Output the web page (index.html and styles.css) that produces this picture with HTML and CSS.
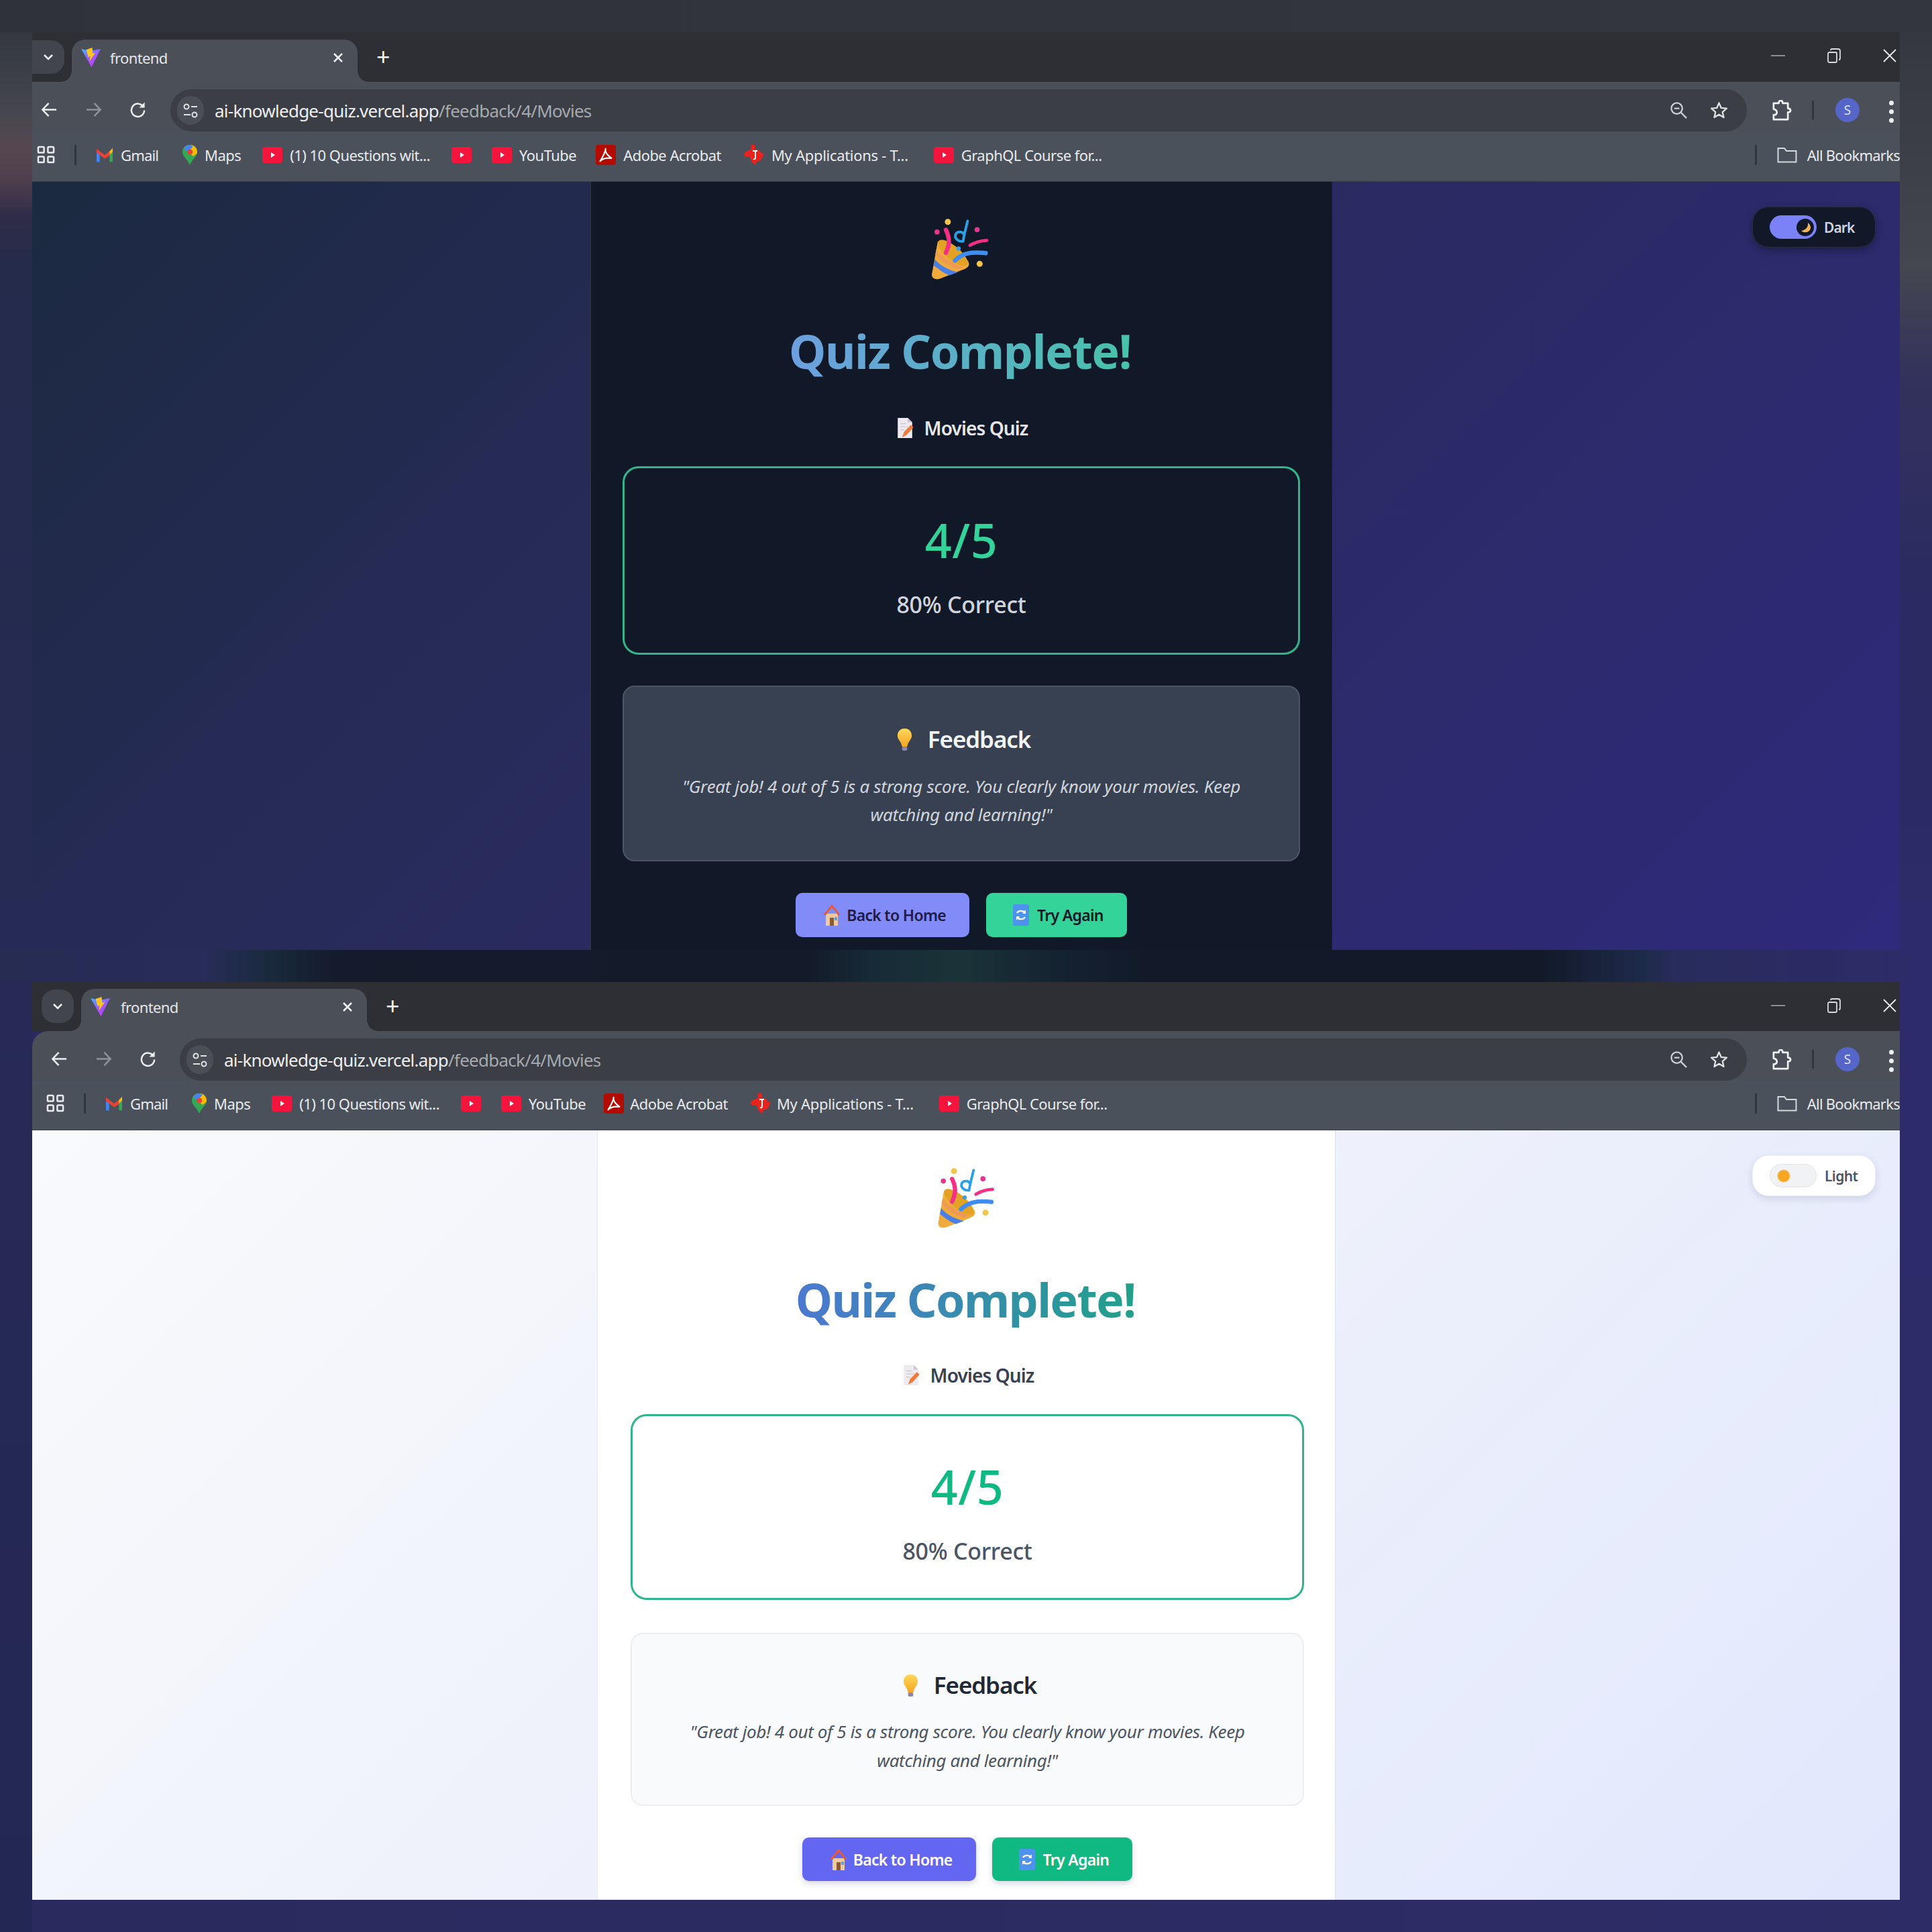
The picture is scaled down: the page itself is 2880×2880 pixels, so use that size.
FILE: index.html
```html
<!DOCTYPE html>
<html lang="en">
<head>
<meta charset="utf-8">
<title>frontend</title>
<link rel="stylesheet" href="styles.css">
</head>
<body>
<svg class="defs" width="0" height="0" aria-hidden="true">
  <defs>
    <linearGradient id="g-vite" x1="0" y1="0" x2="0.6" y2="1"><stop offset="0" stop-color="#41b6ff"/><stop offset="0.55" stop-color="#9b5cff"/><stop offset="1" stop-color="#c13dff"/></linearGradient>
    <linearGradient id="g-bulb" x1="0" y1="0" x2="0" y2="1"><stop offset="0" stop-color="#ffd85a"/><stop offset="1" stop-color="#f5a524"/></linearGradient>
    <symbol id="i-vite" viewBox="0 0 30 30"><path d="M0 2 15 5 30 2 16 30Z" fill="url(#g-vite)"/><path d="M17 0 8 3 11 15 14 13 13 21 22 8 18 9Z" fill="#ffc51f"/></symbol>
    <symbol id="i-back" viewBox="0 0 26 26"><path d="M24 13H3M12 3 2.500 13 12 23" fill="none" stroke="currentColor" stroke-width="2.600"/></symbol>
    <symbol id="i-fwd" viewBox="0 0 26 26"><path d="M2 13H23M14 3 23.500 13 14 23" fill="none" stroke="currentColor" stroke-width="2.600"/></symbol>
    <symbol id="i-reload" viewBox="0 0 26 26"><path d="M21.500 8.500A10 10 0 1 0 23 14" fill="none" stroke="currentColor" stroke-width="2.600"/><path d="M23.500 1.500V10H15Z" fill="currentColor"/></symbol>
    <symbol id="i-tune" viewBox="0 0 24 24"><circle cx="6" cy="6" r="3.500" fill="none" stroke="currentColor" stroke-width="2"/><path d="M13 6H22M2 18H12" stroke="currentColor" stroke-width="2"/><circle cx="18" cy="18" r="3.500" fill="none" stroke="currentColor" stroke-width="2"/></symbol>
    <symbol id="i-zoom" viewBox="0 0 28 28"><circle cx="11" cy="11" r="8.500" fill="none" stroke="currentColor" stroke-width="2.400"/><path d="M7 11H15M17 17 26 26" stroke="currentColor" stroke-width="2.400"/></symbol>
    <symbol id="i-star" viewBox="0 0 28 28"><path d="M14 2.500 17.400 10.300 25.800 11 19.400 16.600 21.300 24.900 14 20.500 6.700 24.900 8.600 16.600 2.200 11 10.600 10.300Z" fill="none" stroke="currentColor" stroke-width="2.400" stroke-linejoin="round"/></symbol>
    <symbol id="i-puzzle" viewBox="0 0 32 32"><path d="M4 5H12Q12 1 15 1T18 5H26V13Q30 13 30 16T26 19V30H4V23Q9 23 9 19T4 14Z" fill="none" stroke="currentColor" stroke-width="2.800" stroke-linejoin="round"/></symbol>
    <symbol id="i-apps" viewBox="0 0 28 28"><g fill="none" stroke="currentColor" stroke-width="2.600"><rect x="2" y="2" width="9" height="9" rx="1.500"/><rect x="17" y="2" width="9" height="9" rx="1.500"/><rect x="2" y="17" width="9" height="9" rx="1.500"/><rect x="17" y="17" width="9" height="9" rx="1.500"/></g></symbol>
    <symbol id="i-gmail" viewBox="0 0 30 26"><path d="M2 24V5L7 8V24Z" fill="#4285f4"/><path d="M23 24V8L28 5V24Z" fill="#34a853"/><path d="M2 3 15 13 23 7V14L15 19 2 9Z" fill="#ea4335"/><path d="M23 7 28 2V8L23 13Z" fill="#fbbc04"/></symbol>
    <symbol id="i-maps" viewBox="0 0 22 30"><path d="M11 0C4 0 0 5 0 10.500 0 17 7 21 11 30 15 21 22 17 22 10.500 22 5 18 0 11 0Z" fill="#34a853"/><path d="M11 0C7 0 4 2 2 5L16 17C19 14 22 14 22 10.500 22 5 18 0 11 0Z" fill="#fbbc04"/><path d="M11 0C7 0 4 2 2 5L8 11 16 2Z" fill="#4285f4"/><circle cx="11" cy="10.500" r="4" fill="#ea4335"/></symbol>
    <symbol id="i-yt" viewBox="0 0 30 24"><rect width="30" height="24" rx="4" fill="#f4143c"/><path d="M13 8 19 12 13 16Z" fill="#fff"/></symbol>
    <symbol id="i-adobe" viewBox="0 0 30 30"><rect width="30" height="30" rx="4" fill="#b30b00"/><path d="M15 5C13 10 16 14 24 20 17 19 10 20 6 25 10 19 14 12 15 5Z" fill="none" stroke="#fff" stroke-width="2"/></symbol>
    <symbol id="i-ti" viewBox="0 0 30 30"><path d="M11 0H16V6L23 8 26 12 30 13 25 23 19 25 16 30 11 24 9 18 1 17 0 12 7 8 11 7Z" fill="#e8221d"/><path d="M13 9H20M17 9V19Q17 22 14 21" fill="none" stroke="#fff" stroke-width="2"/></symbol>
    <symbol id="i-folder" viewBox="0 0 30 24"><path d="M1.500 22.500V2H11L14 6H28.500V22.500Z" fill="none" stroke="currentColor" stroke-width="2"/></symbol>
    <symbol id="i-restore" viewBox="0 0 20 22"><rect x="1" y="6" width="13" height="15" rx="2" fill="none" stroke="currentColor" stroke-width="1.800"/><path d="M5 3Q5 1 7 1H16Q19 1 19 4V15Q19 17 17 17" fill="none" stroke="currentColor" stroke-width="1.800"/></symbol>
    <symbol id="i-popper" viewBox="260 70 270 290">
      <path d="M290 180C335 165 405 225 432 272 442 292 428 302 415 307L300 352C272 360 258 345 264 325Z" fill="#efab3c"/>
      <path d="M277 262C300 290 335 310 384 322L345 337C315 325 290 305 271 290Z" fill="#4a7fe8"/>
      <path d="M283 216C300 245 340 272 408 298L384 308C340 295 300 268 279 240Z" fill="#ee9a55"/>
      <ellipse cx="360" cy="232" rx="86" ry="32" transform="rotate(40 360 232)" fill="#e3a224"/>
      <path d="M328 125C348 165 345 195 328 232" fill="none" stroke="#f42f85" stroke-width="20" stroke-linecap="round"/>
      <path d="M370 268C405 232 450 226 513 233" fill="none" stroke="#3f8cf2" stroke-width="20" stroke-linecap="round"/>
      <path d="M440 197C465 182 490 175 518 174" fill="none" stroke="#f42f85" stroke-width="15" stroke-linecap="round"/>
      <path d="M429 84C420 120 412 150 408 178Q385 182 372 160 370 132 398 135 410 138 414 150" fill="none" stroke="#2ba0e6" stroke-width="12" stroke-linecap="round"/>
      <circle cx="337" cy="88" r="14" fill="#f4c54a"/><circle cx="287" cy="135" r="12" fill="#e9358f"/><circle cx="473" cy="124" r="12" fill="#e9358f"/><circle cx="485" cy="283" r="14" fill="#f4c54a"/><circle cx="387" cy="212" r="10" fill="#3f9cdc"/>
    </symbol>
    <symbol id="i-memo" viewBox="0 0 26 32"><path d="M1 0H17L24 7V32H1Z" fill="#eeeaf0"/><path d="M17 0V7H24Z" fill="#c9c4d0"/><path d="M5 9H14M5 14H18M5 19H11" stroke="#cfcad6" stroke-width="1.500"/><path d="M8 31 11 22 22 11 26 15 15 27Z" fill="#f07a3a"/></symbol>
    <symbol id="i-bulb" viewBox="0 0 28 34"><path d="M14 0C7 0 3 5 3 11 3 17 9 20 10 28H18C19 20 25 17 25 11 25 5 21 0 14 0Z" fill="url(#g-bulb)"/><rect x="10" y="28" width="8" height="6" rx="2" fill="#8d86a8"/></symbol>
    <symbol id="i-house" viewBox="0 0 26 32"><path d="M4 14H22V32H4Z" fill="#efc9a0"/><path d="M13 0 26 16H21V14L13 5 5 14V16H0Z" fill="#e8583c"/><rect x="10" y="20" width="6" height="12" fill="#8a5a32"/><rect x="17" y="19" width="4" height="5" fill="#5aa5e8"/></symbol>
    <symbol id="i-repeat" viewBox="0 0 24 32"><rect width="24" height="32" rx="3" fill="#4d93ee"/><path d="M6 13C8 9 15 9 17 12M18 19C16 23 9 23 7 20" fill="none" stroke="#fff" stroke-width="2.400"/><path d="M19 8V14H14ZM5 24V18H10Z" fill="#fff"/></symbol>
    <symbol id="i-moon" viewBox="0 0 26 26"><circle cx="13" cy="13" r="13" fill="#111827"/><path d="M17 6C18 12 14 17 7 18 11 22 20 21 21 14 21 11 20 8 17 6Z" fill="#f5b45a"/></symbol>
    <symbol id="i-sun" viewBox="0 0 20 20"><circle cx="10" cy="10" r="9" fill="#f5a623" stroke="#f0c27a" stroke-width="1.500" stroke-dasharray="3 1.500"/></symbol>
  </defs>
</svg>

<main class="sheet">
  <section class="win win--dark">
    <div class="strip">
      <div class="expand"><svg class="chev" viewBox="0 0 16 10"><path d="M2 2 8 8 14 2" fill="none" stroke="currentColor" stroke-width="2.600"/></svg></div>
      <div class="tab">
        <svg class="ico favicon"><use href="#i-vite"/></svg>
        <span class="tab-title">frontend</span>
        <svg class="tab-x" viewBox="0 0 16 16"><path d="M2 2 14 14M14 2 2 14" stroke="currentColor" stroke-width="2.600"/></svg>
      </div>
      <span class="tab-plus">+</span>
      <div class="wctl">
        <span class="wmin"></span>
        <svg class="ico wrest"><use href="#i-restore"/></svg>
        <svg class="wclose" viewBox="0 0 20 20"><path d="M1 1 19 19M19 1 1 19" stroke="currentColor" stroke-width="1.800"/></svg>
      </div>
    </div>
    <div class="toolbar">
      <svg class="ico nav"><use href="#i-back"/></svg>
      <svg class="ico nav nav--off"><use href="#i-fwd"/></svg>
      <svg class="ico nav"><use href="#i-reload"/></svg>
      <div class="omni">
        <span class="chip"><svg class="ico chip-ico"><use href="#i-tune"/></svg></span>
        <span class="url"><span class="host">ai-knowledge-quiz.vercel.app</span><span class="path">/feedback/4/Movies</span></span>
        <svg class="ico omni-zoom"><use href="#i-zoom"/></svg>
        <svg class="ico omni-star"><use href="#i-star"/></svg>
      </div>
      <svg class="ico puzzle"><use href="#i-puzzle"/></svg>
      <span class="vsep"></span>
      <span class="avatar">S</span>
      <span class="dots"><i></i><i></i><i></i></span>
    </div>
    <div class="bookmarks">
      <svg class="ico apps"><use href="#i-apps"/></svg>
      <span class="bsep"></span>
      <span class="bm bm--gmail"><svg class="ico bi"><use href="#i-gmail"/></svg>Gmail</span>
      <span class="bm bm--maps"><svg class="ico bi bi--maps"><use href="#i-maps"/></svg>Maps</span>
      <span class="bm bm--q"><svg class="ico bi"><use href="#i-yt"/></svg>(1) 10 Questions wit...</span>
      <span class="bm bm--y1"><svg class="ico bi"><use href="#i-yt"/></svg></span>
      <span class="bm bm--yt"><svg class="ico bi"><use href="#i-yt"/></svg>YouTube</span>
      <span class="bm bm--ad"><svg class="ico bi bi--tall"><use href="#i-adobe"/></svg>Adobe Acrobat</span>
      <span class="bm bm--ti"><svg class="ico bi bi--tall"><use href="#i-ti"/></svg>My Applications - T...</span>
      <span class="bm"><svg class="ico bi"><use href="#i-yt"/></svg>GraphQL Course for...</span>
      <span class="bsep bsep--end"></span>
      <span class="bm bm--all"><svg class="ico bi bi--folder"><use href="#i-folder"/></svg>All Bookmarks</span>
    </div>
    <div class="page">
      <div class="theme"><span class="track"><svg class="ico knob"><use href="#i-moon"/></svg></span><span class="theme-label">Dark</span></div>
      <article class="panel">
        <svg class="ico popper"><use href="#i-popper"/></svg>
        <h1 class="title">Quiz Complete!</h1>
        <p class="topic"><svg class="ico memo"><use href="#i-memo"/></svg>Movies Quiz</p>
        <div class="score"><div class="score-num">4/5</div><div class="score-pct">80% Correct</div></div>
        <div class="fb">
          <h2 class="fb-head"><svg class="ico bulb"><use href="#i-bulb"/></svg>Feedback</h2>
          <p class="fb-text">"Great job! 4 out of 5 is a strong score. You clearly know your movies. Keep watching and learning!"</p>
        </div>
        <div class="actions">
          <a class="btn btn--home"><svg class="ico bicon"><use href="#i-house"/></svg>Back to Home</a>
          <a class="btn btn--retry"><svg class="ico bicon bicon--r"><use href="#i-repeat"/></svg>Try Again</a>
        </div>
      </article>
    </div>
  </section>

  <div class="gap"></div>

  <section class="win win--light">
    <div class="strip">
      <div class="expand"><svg class="chev" viewBox="0 0 16 10"><path d="M2 2 8 8 14 2" fill="none" stroke="currentColor" stroke-width="2.600"/></svg></div>
      <div class="tab">
        <svg class="ico favicon"><use href="#i-vite"/></svg>
        <span class="tab-title">frontend</span>
        <svg class="tab-x" viewBox="0 0 16 16"><path d="M2 2 14 14M14 2 2 14" stroke="currentColor" stroke-width="2.600"/></svg>
      </div>
      <span class="tab-plus">+</span>
      <div class="wctl">
        <span class="wmin"></span>
        <svg class="ico wrest"><use href="#i-restore"/></svg>
        <svg class="wclose" viewBox="0 0 20 20"><path d="M1 1 19 19M19 1 1 19" stroke="currentColor" stroke-width="1.800"/></svg>
      </div>
    </div>
    <div class="toolbar">
      <svg class="ico nav"><use href="#i-back"/></svg>
      <svg class="ico nav nav--off"><use href="#i-fwd"/></svg>
      <svg class="ico nav"><use href="#i-reload"/></svg>
      <div class="omni">
        <span class="chip"><svg class="ico chip-ico"><use href="#i-tune"/></svg></span>
        <span class="url"><span class="host">ai-knowledge-quiz.vercel.app</span><span class="path">/feedback/4/Movies</span></span>
        <svg class="ico omni-zoom"><use href="#i-zoom"/></svg>
        <svg class="ico omni-star"><use href="#i-star"/></svg>
      </div>
      <svg class="ico puzzle"><use href="#i-puzzle"/></svg>
      <span class="vsep"></span>
      <span class="avatar">S</span>
      <span class="dots"><i></i><i></i><i></i></span>
    </div>
    <div class="bookmarks">
      <svg class="ico apps"><use href="#i-apps"/></svg>
      <span class="bsep"></span>
      <span class="bm bm--gmail"><svg class="ico bi"><use href="#i-gmail"/></svg>Gmail</span>
      <span class="bm bm--maps"><svg class="ico bi bi--maps"><use href="#i-maps"/></svg>Maps</span>
      <span class="bm bm--q"><svg class="ico bi"><use href="#i-yt"/></svg>(1) 10 Questions wit...</span>
      <span class="bm bm--y1"><svg class="ico bi"><use href="#i-yt"/></svg></span>
      <span class="bm bm--yt"><svg class="ico bi"><use href="#i-yt"/></svg>YouTube</span>
      <span class="bm bm--ad"><svg class="ico bi bi--tall"><use href="#i-adobe"/></svg>Adobe Acrobat</span>
      <span class="bm bm--ti"><svg class="ico bi bi--tall"><use href="#i-ti"/></svg>My Applications - T...</span>
      <span class="bm"><svg class="ico bi"><use href="#i-yt"/></svg>GraphQL Course for...</span>
      <span class="bsep bsep--end"></span>
      <span class="bm bm--all"><svg class="ico bi bi--folder"><use href="#i-folder"/></svg>All Bookmarks</span>
    </div>
    <div class="page">
      <div class="theme"><span class="track"><svg class="ico knob"><use href="#i-sun"/></svg></span><span class="theme-label">Light</span></div>
      <article class="panel">
        <svg class="ico popper"><use href="#i-popper"/></svg>
        <h1 class="title">Quiz Complete!</h1>
        <p class="topic"><svg class="ico memo"><use href="#i-memo"/></svg>Movies Quiz</p>
        <div class="score"><div class="score-num">4/5</div><div class="score-pct">80% Correct</div></div>
        <div class="fb">
          <h2 class="fb-head"><svg class="ico bulb"><use href="#i-bulb"/></svg>Feedback</h2>
          <p class="fb-text">"Great job! 4 out of 5 is a strong score. You clearly know your movies. Keep watching and learning!"</p>
        </div>
        <div class="actions">
          <a class="btn btn--home"><svg class="ico bicon"><use href="#i-house"/></svg>Back to Home</a>
          <a class="btn btn--retry"><svg class="ico bicon bicon--r"><use href="#i-repeat"/></svg>Try Again</a>
        </div>
      </article>
    </div>
  </section>
</main>
</body>
</html>
```

FILE: styles.css
```css
* { box-sizing: border-box; }
html, body { margin: 0; padding: 0; }
body {
  font-family: "Noto Sans", "Open Sans", sans-serif;
  background: #262a55;
}
.defs { position: absolute; }
.ico { display: block; flex: none; }

.sheet {
  width: 2880px;
  height: 2880px;
  padding: 48px 0;
  background:
    linear-gradient(90deg, #2f3239, #31343b 50%, #33363d) left top / 100% 48px no-repeat,
    linear-gradient(180deg, #2f3239 0, #3a3e45 100px, #47474f 170px, #57474f 220px, #4f3f4e 270px, #2f2c48 320px, #242b4b 400px, #262a55 1464px, #232753 2880px) left top / 48px 100% no-repeat,
    linear-gradient(180deg, #33363d 0, #444650 400px, #33325c 560px, #2b2a62 900px, #2d2b6a 1500px, #2d2c66 2880px) right top / 48px 100% no-repeat,
    linear-gradient(90deg, #2a2a5e, #2d2c66 100%);
}

/* between the two windows: the blurred wallpaper showing through */
.gap {
  height: 48px;
  background: linear-gradient(90deg, #262c52 0, #282c5a 300px, #1a2a3d 400px, #141b2c 500px, #131a2a 1200px, #172a37 1300px, #1a3338 1430px, #142030 1600px, #121a2a 1700px, #121a2a 2300px, #1e2a4a 2450px, #282c5c 2500px, #2d2b6a 2880px);
}

.win {
  margin: 0 48px;
  width: 2784px;
  color: #e8eaed;
  overflow: hidden;
  --strip-h: 74px;
  --tool-h: 74px;
  --inset: 0px;
}
.win--light { --strip-h: 73px; --tool-h: 73px; --inset: 14px; }

/* ---------- tab strip ---------- */
.strip {
  height: var(--strip-h);
  background: #2d2f35;
  display: flex;
  align-items: flex-end;
  padding-left: var(--inset);
  position: relative;
}
.expand {
  width: 48px;
  height: 50px;
  margin-bottom: 12px;
  background: #42454c;
  border-radius: 0 20px 20px 0;
  display: flex;
  align-items: center;
  justify-content: center;
}
.win--light .expand { border-radius: 20px; }
.chev { width: 16px; height: 10px; color: #eceef0; }
.tab {
  position: relative;
  width: 426px;
  height: 63px;
  margin-left: 11px;
  background: #4a4f58;
  border-radius: 20px 20px 0 0;
  display: flex;
  align-items: center;
  padding: 0 0 10px 14px;
}
.tab::before, .tab::after {
  content: "";
  position: absolute;
  bottom: 0;
  width: 16px;
  height: 16px;
}
.tab::before { left: -16px; background: radial-gradient(circle at 0 0, transparent 15.500px, #4a4f58 16px); }
.tab::after { right: -16px; background: radial-gradient(circle at 100% 0, transparent 15.500px, #4a4f58 16px); }
.favicon { width: 29px; height: 31px; }
.tab-title { margin-left: 14px; font-size: 22px; letter-spacing: -0.6px; color: #e4e6e8; }
.win--light .tab-title { margin-left: 16px; }
.tab-x { width: 16px; height: 16px; margin-left: auto; margin-right: 21px; color: #eceef0; }
.tab-plus { margin: 0 0 14px 28px; font-size: 36px; line-height: 46px; font-weight: 400; color: #f1f2f3; height: 46px; }
.wctl { margin-left: auto; display: flex; align-items: center; height: 70px; position: absolute; right: 5px; top: 0; }
.wmin { width: 21px; height: 2px; background: #8b8e94; }
.wrest { width: 20px; height: 22px; margin-left: 63px; color: #d8dadc; }
.wclose { width: 20px; height: 20px; margin-left: 63px; color: #e8eaed; }

/* ---------- toolbar ---------- */
.toolbar {
  height: var(--tool-h);
  background: #4a4f58;
  display: flex;
  align-items: flex-start;
  padding: 11px 0 0 calc(13px + var(--inset));
}
.win--light .toolbar { border-top-left-radius: 24px; padding-left: 28px; }
.nav { width: 25px; height: 25px; margin-top: 18px; color: #eceef0; }
.nav + .nav { margin-left: 41px; }
.nav--off { color: #8f939a; }
.omni {
  height: 63px;
  margin-left: 36px;
  flex: 1;
  background: #3b3e44;
  border-radius: 32px;
  display: flex;
  align-items: center;
  padding: 0 28px 0 10px;
}
.win--light .omni { margin-left: 35px; }
.chip {
  width: 40px;
  height: 43px;
  border-radius: 20px;
  background: #4a4e55;
  display: flex;
  align-items: center;
  justify-content: center;
}
.chip-ico { width: 24px; height: 24px; color: #e0e2e4; }
.url { margin-left: 16px; font-size: 26px; letter-spacing: -0.75px; white-space: nowrap; }
.host { color: #eceef0; }
.path { color: #a6a9ae; }
.omni-zoom { width: 27px; height: 27px; margin-left: auto; color: #c9ccd0; }
.omni-star { width: 27px; height: 27px; margin-left: 33px; color: #dfe1e3; }
.puzzle { width: 31px; height: 31px; margin: 16px 0 0 36px; color: #f0f1f2; }
.vsep { width: 3px; height: 28px; margin: 17px 0 0 30px; background: #33363c; }
.avatar {
  width: 36px;
  height: 36px;
  margin: 13px 0 0 32px;
  border-radius: 50%;
  background: #5566c8;
  color: #dfe4f5;
  font-size: 19px;
  line-height: 36px;
  text-align: center;
}
.dots { display: flex; flex-direction: column; gap: 6px; margin: 17px 0 0 44px; width: 16px; }
.dots i { display: block; width: 7px; height: 7px; border-radius: 50%; background: #eceef0; }

/* ---------- bookmarks ---------- */
.bookmarks {
  height: 75px;
  padding: 0 0 5px calc(7px + var(--inset));
  background: #4b515a;
  border-bottom: 1px solid #3c4047;
  display: flex;
  align-items: center;
  font-size: 22px;
  letter-spacing: -0.55px;
  color: #e8eaed;
  white-space: nowrap;
}
.apps { width: 27px; height: 27px; color: #e8eaed; }
.bsep { width: 3px; height: 30px; margin: 0 27px 0 29px; background: #33363c; }
.bm { display: flex; align-items: center; gap: 11px; margin-right: 32px; }
.bm--gmail { gap: 9px; margin-right: 36px; letter-spacing: -0.85px; }
.bm--y1 { margin-right: 30px; }
.bm--yt { margin-right: 29px; }
.win--light .bm--yt { margin-right: 27px; }
.bm--ad { margin-right: 34px; }
.win--light .bm--ad, .win--light .bm--ti { gap: 9px; }
.bm--ti { margin-right: 38px; letter-spacing: -0.3px; }
.bi { width: 30px; height: 24px; }
.bi--maps { width: 22px; height: 30px; }
.bi--tall { height: 30px; }
.bi--folder { height: 24px; color: #d6d8db; margin-right: 4px; }
.bsep--end { margin: 0 30px 0 auto; }
.bm--all { margin-right: 0; letter-spacing: -0.75px; }

/* ---------- page ---------- */
.page {
  position: relative;
  height: 1145px;
  padding-left: 832px;
  background: linear-gradient(135deg, #1b2940, #272b58 35%, #2f2a7c);
}
.win--light .page {
  height: 1147px;
  padding-left: 842px;
  background: linear-gradient(135deg, #f9fafc, #eef1fb 50%, #e1e7fd);
}
.theme {
  position: absolute;
  top: 37px;
  right: 36px;
  width: 184px;
  height: 61px;
  border-radius: 24px;
  background: #111827;
  border: 1px solid #2b3040;
  box-shadow: 0 4px 12px rgba(0, 0, 0, .3);
  display: flex;
  align-items: center;
  padding-left: 25px;
}
.track {
  width: 70px;
  height: 35px;
  border-radius: 18px;
  background: #7b82f8;
  display: flex;
  align-items: center;
  justify-content: flex-end;
  padding-right: 4px;
}
.knob { width: 26px; height: 26px; }
.theme-label { margin-left: 11px; font-size: 21px; font-weight: 600; letter-spacing: -0.9px; color: #d1d5db; }
.win--light .theme { background: #fff; border-color: #eef0f6; box-shadow: 0 4px 12px rgba(60, 70, 110, .16); }
.win--light .track { background: #f1f2f4; border: 1px solid #e2e4e8; justify-content: flex-start; padding: 0 0 0 10px; }
.win--light .knob { width: 20px; height: 20px; }
.win--light .theme-label { color: #4b5563; margin-left: 12px; letter-spacing: -0.6px; }

.panel {
  width: 1106px;
  height: 100%;
  padding: 54px 47px 0 47px;
  background: #111827;
  border-left: 1px solid #2f3644;
  border-right: 1px solid #1a2133;
  display: flex;
  flex-direction: column;
  --title: linear-gradient(90deg, #6c9fe0, #48c2aa);
  --topic-c: #e5e7eb;
  --num: #34d399;
  --pct: #d1d5db;
  --score-b: #34b48a;
  --fb-bg: #374151;
  --fb-b: #4b5563;
  --fb-h: #f3f4f6;
  --fb-t: #d1d5db;
}
.win--light .panel {
  width: 1101px;
  padding: 55px 46px 0 49px;
  background: #fff;
  border-left-color: #e6e9f2;
  border-right-color: #dfe4f2;
  --title: linear-gradient(90deg, #4c78d0, #22a08a);
  --topic-c: #374151;
  --num: #10b981;
  --pct: #4b5563;
  --score-b: #2fb58d;
  --fb-bg: #f9fafb;
  --fb-b: #eceef1;
  --fb-h: #1f2937;
  --fb-t: #4b5563;
}
.popper { width: 87px; height: 93px; margin: 0 auto; transform: translateX(-2px); }
.win--light .popper { height: 92px; }
.title {
  margin: 63px auto 0;
  font-size: 70px;
  line-height: 84px;
  font-weight: 700;
  letter-spacing: -1.450px;
  background: var(--title);
  -webkit-background-clip: text;
  background-clip: text;
  color: transparent;
  transform: translateX(-2px);
}
.win--light .title { letter-spacing: -1.700px; transform: translateX(-3px); }
.topic {
  margin: 53px 0 0;
  height: 40px;
  padding-left: 3px;
  font-size: 28px;
  line-height: 40px;
  font-weight: 600;
  letter-spacing: -0.9px;
  color: var(--topic-c);
  display: flex;
  justify-content: center;
  align-items: center;
  gap: 16px;
}
.win--light .topic { margin-top: 51px; }
.memo { width: 25px; height: 30px; }
.score {
  margin-top: 37px;
  height: 281px;
  border: 3px solid var(--score-b);
  border-radius: 24px;
  padding-top: 67px;
  text-align: center;
}
.win--light .score { margin-top: 38px; height: 277px; padding-top: 65px; }
.score-num { font-size: 70px; line-height: 80px; font-weight: 500; letter-spacing: 0.5px; color: var(--num); }
.score-pct { margin-top: 34px; font-size: 34px; line-height: 44px; font-weight: 500; letter-spacing: -0.3px; color: var(--pct); }
.fb {
  margin-top: 46px;
  height: 262px;
  background: var(--fb-bg);
  border: 2px solid var(--fb-b);
  border-radius: 18px;
  padding: 56px 60px 0;
  text-align: center;
}
.win--light .fb { margin-top: 49px; height: 258px; padding-top: 54px; }
.fb-head {
  margin: 0;
  height: 44px;
  padding-left: 5px;
  font-size: 35px;
  line-height: 44px;
  font-weight: 600;
  letter-spacing: -1.100px;
  color: var(--fb-h);
  display: flex;
  justify-content: center;
  align-items: center;
  gap: 21px;
}
.bulb { width: 27px; height: 33px; }
.fb-text { margin: 27px 0 0; font-size: 26px; line-height: 42px; font-style: italic; letter-spacing: -0.3px; color: var(--fb-t); }
.win--light .fb-text { margin-top: 26px; line-height: 43px; letter-spacing: -0.37px; }
.actions { margin-top: 47px; display: flex; justify-content: center; gap: 25px; }
.win--light .actions { gap: 24px; }
.btn {
  height: 66px;
  padding: 0 35px 0 41px;
  border-radius: 10px;
  font-size: 23px;
  font-weight: 600;
  letter-spacing: -0.7px;
  display: flex;
  align-items: center;
  gap: 9px;
}
.win--light .btn { height: 65px; color: #fff; box-shadow: 0 4px 10px rgba(70, 80, 120, .22); }
.btn--home { background: #818cf8; color: #1e1b4b; }
.btn--retry { background: #34d399; color: #111827; padding-left: 40px; }
.win--light .btn--home { background: #6366f1; }
.win--light .btn--retry { background: #10b981; }
.bicon { width: 26px; height: 32px; }
.bicon--r { width: 24px; margin-right: 3px; }
```
